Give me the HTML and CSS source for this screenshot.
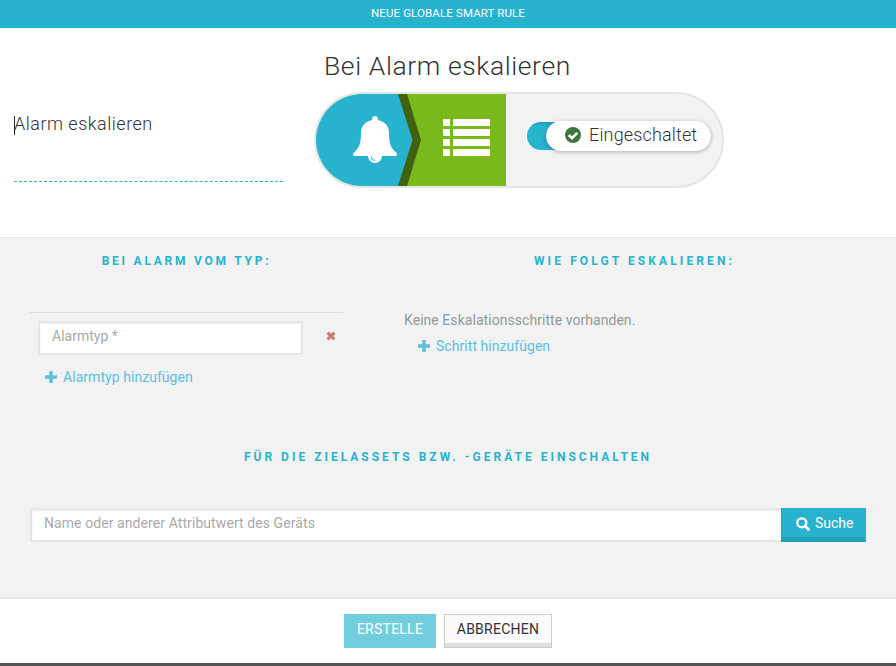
FILE: index.html
```html
<!DOCTYPE html>
<html lang="de">
<head>
<meta charset="utf-8">
<title>Neue globale Smart Rule</title>
<link rel="stylesheet" href="styles.css">
</head>
<body>
<header class="topbar"><span>NEUE GLOBALE SMART RULE</span></header>
<section class="hero">
  <div class="rule-name"><i class="caret"></i><span>Alarm eskalieren</span></div>
  <div class="rule-summary">
    <h1><span>Bei Alarm eskalieren</span></h1>
    <div class="pill">
      <svg class="pill-art" width="191" height="92" viewBox="0 0 191 92">
        <path fill="#27b2ce" d="M0 0H84L98 46L84 92H0z"/>
        <path fill="#7ab91b" d="M91 0H191V92H91L105 46z"/>
        <path fill="#40610e" d="M83 0H92L106 46L92 92H83L97.500 46z"/>
        <g fill="#fff">
          <path d="M60 22a3 3 0 0 1 2.800 4C70 27.500 74 32 74 39C74 50 76 54 81 58.500C83 60.500 82 62 80 62H40C38 62 37 60.500 39 58.500C44 54 46 50 46 39C46 32 50 27.500 57.200 26A3 3 0 0 1 60 22z"/>
          <path d="M53 62H67A7 7 0 0 1 53 62z"/>
          <path d="M128 25h7v7h-7zM138 25h37v7h-37zM128 35h7v7h-7zM138 35h37v7h-37zM128 45h7v7h-7zM138 45h37v7h-37zM128 55h7v7h-7zM138 55h37v7h-37z"/>
        </g>
        <path d="M56 62.500A4 4 0 0 0 60 66.500" fill="none" stroke="#27b2ce" stroke-width="1"/>
      </svg>
      <div class="switch">
        <div class="knob">
          <svg width="16" height="16" viewBox="0 0 16 16"><circle cx="8" cy="8" r="8" fill="#3c763d"/><path d="M3.800 8L7 11.100L12.300 5.900" fill="none" stroke="#fff" stroke-width="2.700"/></svg>
          <span>Eingeschaltet</span>
        </div>
      </div>
    </div>
  </div>
</section>
<main class="config">
  <div class="columns">
    <section class="when">
      <h2><span>BEI ALARM VOM TYP:</span></h2>
      <div class="type-row">
        <div class="field"><span class="t-type">Alarmtyp *</span></div>
        <svg class="remove" width="10" height="10" viewBox="0 0 10 10"><path d="M1.600 1.600L8.400 8.400M8.400 1.600L1.600 8.400" stroke="#c67b7b" stroke-width="3"/></svg>
      </div>
      <a class="add add-type"><svg width="12" height="12" viewBox="0 0 12 12"><path d="M6 0V12M0 6H12" stroke="#5bc0de" stroke-width="3.400"/></svg><span>Alarmtyp hinzufügen</span></a>
    </section>
    <section class="then">
      <h2><span>WIE FOLGT ESKALIEREN:</span></h2>
      <p class="empty"><span>Keine Eskalationsschritte vorhanden.</span></p>
      <a class="add add-step"><svg width="12" height="12" viewBox="0 0 12 12"><path d="M6 0V12M0 6H12" stroke="#5bc0de" stroke-width="3.400"/></svg><span>Schritt hinzufügen</span></a>
    </section>
  </div>
  <h2 class="targets"><span>FÜR DIE ZIELASSETS BZW. -GERÄTE EINSCHALTEN</span></h2>
  <div class="search">
    <div class="field search-field"><span class="t-search">Name oder anderer Attributwert des Geräts</span></div>
    <div class="search-btn"><svg width="14" height="14" viewBox="0 0 14 14"><circle cx="5.800" cy="5.800" r="4.500" fill="none" stroke="#fff" stroke-width="2.300"/><path d="M9 9L12.500 12.500" stroke="#fff" stroke-width="2.700" stroke-linecap="round"/></svg><span>Suche</span></div>
  </div>
</main>
<footer class="actions">
  <div class="btn primary"><span>ERSTELLE</span></div>
  <div class="btn cancel"><span>ABBRECHEN</span></div>
</footer>
</body>
</html>
```
FILE: styles.css
```css
* { box-sizing: border-box; }
body { margin: 0; width: 896px; height: 666px; overflow: hidden; background: #fff; color: #333; font: 14px/20px Roboto, "Liberation Sans", sans-serif; white-space: nowrap; }
h1, h2, p { margin: 0; font-weight: 400; }
svg { display: block; flex: none; }
.topbar { height: 28px; background: #27b2ce; color: #fff; font-size: 11.500px; line-height: 27px; text-align: center; letter-spacing: .12px; }
.hero { height: 210px; border-bottom: 1px solid #e3e5e6; display: flex; }
.rule-name { display: flex; align-items: flex-start; width: 269px; height: 70px; margin: 84px 0 0 14px; border-bottom: 1px dashed #27b2ce; font-size: 18px; line-height: 24px; }
.rule-name span { font-weight: 300; letter-spacing: .5px; }
.caret { width: 1px; height: 19px; margin: 4px -1px 0 0; background: #222; }
.rule-summary { margin-left: 31px; padding-top: 22px; }
h1 { font-size: 26.500px; font-weight: 300; letter-spacing: .6px; line-height: 32px; padding-left: 10px; }
.pill { width: 410px; height: 96px; margin-top: 10px; border: 2px solid #e3e5e6; border-radius: 48px; background: #f2f2f2; overflow: hidden; display: flex; }
.pill-art { margin-left: -1px; }
.switch { width: 184px; height: 28px; margin: 28px 0 0 21px; border-radius: 14px; background: linear-gradient(#219cb5, #27b2ce 4px); padding-left: 19px; }
.knob { width: 165px; height: 30px; margin-top: -1px; border-radius: 15px; background: #fff; box-shadow: 0 1px 4px rgba(0,0,0,.28); display: flex; align-items: center; padding-left: 19px; gap: 8px; font-size: 18px; font-weight: 300; letter-spacing: .15px; line-height: 28px; }
.knob svg { margin-top: -3px; }
.knob span { margin-top: -2px; }
.config { height: 361px; background: #f2f2f2; border-bottom: 2px solid #e3e5e6; padding: 0 30px; overflow: hidden; }
.columns { display: flex; height: 208px; }
.when { width: 313px; }
.then { width: 463px; margin-left: 60px; }
h2 { color: #27b2ce; font-size: 12px; font-weight: 700; line-height: 20px; padding-top: 13px; height: 74px; text-align: center; letter-spacing: 3px; }
.when h2 { letter-spacing: 2.750px; }
.then h2 { letter-spacing: 3.100px; }
.type-row { border-top: 1px solid #dedede; height: 51px; padding: 8px 7px 0 8px; display: flex; align-items: flex-start; }
.field { flex: none; background: #fff; border: 2px solid #e5e5e5; box-shadow: inset 0 1px 2px rgba(0,0,0,.08); color: #aaa; height: 34px; width: 265px; padding-left: 12px; line-height: 27px; }
.remove { margin: 10px 0 0 23px; }
.add { display: flex; align-items: center; gap: 6px; color: #5bc0de; height: 20px; }
.add svg { margin-top: -2px; }
.add span { margin-top: -2px; letter-spacing: .05px; }
.add-type { margin: 5px 0 0 15px; }
.empty { color: #91999c; margin: -2px 0 0 1px; letter-spacing: .05px; }
.add-step { margin: 7px 0 0 15px; }
.targets { height: 62px; padding-top: 1px; }
.search { display: flex; }
.search-field { flex: 1; border-right: 0; letter-spacing: .08px; }
.search-btn { width: 85px; height: 34px; background: #27b2ce; border: 1px solid #219fb8; border-width: 0 1px 1px 1px; border-right-color: #27b2ce; box-shadow: inset 0 -4px #24a0b9; color: #fff; display: flex; align-items: flex-start; padding: 5px 0 0 14px; gap: 5px; }
.search-btn svg { margin-top: 4px; }
.actions { height: 67px; border-bottom: 3px solid #555; padding-top: 15px; display: flex; justify-content: center; gap: 8px; }
.btn { height: 34px; line-height: 31px; text-align: center; letter-spacing: .25px; }
.primary { width: 92px; background: #72cddf; color: #fff; }
.cancel { width: 108px; background: #fafafa; border: 1px solid #ccc; box-shadow: inset 0 -4px #dedede; line-height: 29px; }
```
